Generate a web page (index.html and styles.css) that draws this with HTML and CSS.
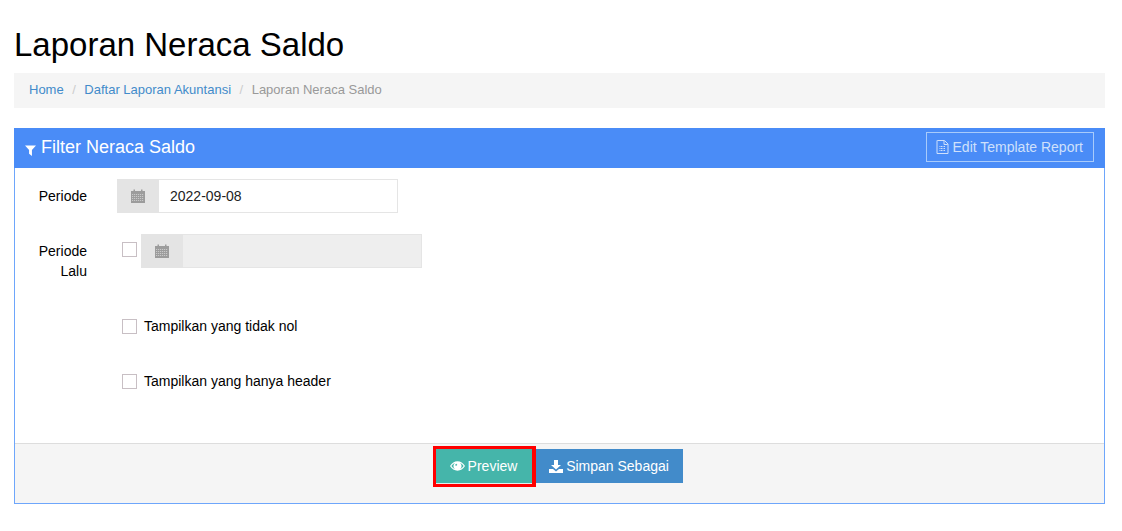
FILE: index.html
```html
<!DOCTYPE html>
<html lang="id">
<head>
<meta charset="utf-8">
<title>Laporan Neraca Saldo</title>
<link rel="stylesheet" href="styles.css">
</head>
<body>
<main class="page">
  <h1 class="title">Laporan Neraca Saldo</h1>
  <nav class="breadcrumb">
    <a href="#">Home</a><span class="sep">/</span><a href="#">Daftar Laporan Akuntansi</a><span class="sep">/</span><span class="current">Laporan Neraca Saldo</span>
  </nav>
  <section class="panel">
    <header class="panel-head">
      <h2 class="panel-title">
        <svg class="ic-filter" viewBox="0 0 10 10"><path d="M0 0.500H10L6.300 4.600V10L3.700 8V4.600Z" fill="#fff"/></svg>
        Filter Neraca Saldo
      </h2>
      <a class="btn-outline" href="#">
        <svg class="ic-file" viewBox="0 0 12 14"><path d="M1 .5H8L11.500 4V13.500H.5V.5Z M7.500 .8V4.500H11.200" fill="none" stroke="currentColor"/><path d="M3 6.500H9M3 8.500H9M3 10.500H9" stroke="currentColor" stroke-dasharray="1 .5"/></svg>
        Edit Template Report
      </a>
    </header>
    <form class="panel-body">
      <div class="row row-periode">
        <label class="label">Periode</label>
        <div class="input-group">
          <span class="addon"><svg class="ic-cal" viewBox="0 0 14 14"><path d="M0 2H2.500V0.500H4V2H10V0.500H11.500V2H14V14H0Z" fill="#9c9c9c"/><path d="M1 5.500H13M1 7.500H13M1 9.500H13M1 11.500H13" stroke="#ddd" stroke-width=".7" stroke-dasharray="1.200 .8"/></svg></span>
          <input class="field" type="text" value="2022-09-08">
        </div>
      </div>
      <div class="row row-lalu">
        <label class="label">Periode Lalu</label>
        <span class="check check-lalu"></span>
        <div class="input-group disabled">
          <span class="addon"><svg class="ic-cal" viewBox="0 0 14 14"><path d="M0 2H2.500V0.500H4V2H10V0.500H11.500V2H14V14H0Z" fill="#9c9c9c"/><path d="M1 5.500H13M1 7.500H13M1 9.500H13M1 11.500H13" stroke="#ddd" stroke-width=".7" stroke-dasharray="1.200 .8"/></svg></span>
          <input class="field" type="text" disabled>
        </div>
      </div>
      <label class="check-row check-row-a"><span class="check"></span>Tampilkan yang tidak nol</label>
      <label class="check-row check-row-b"><span class="check"></span>Tampilkan yang hanya header</label>
    </form>
    <footer class="panel-foot">
      <button class="btn btn-preview" type="button">
        <svg class="ic-eye" viewBox="0 0 16 10"><path fill-rule="evenodd" d="M0 5C2 2 4.800 0 8 0S14 2 16 5C14 8 11.200 10 8 10S2 8 0 5ZM5.200 1.700C3.700 2.300 2.500 3.500 1.500 5 2.500 6.500 3.700 7.700 5.200 8.300A4.300 4.300 0 0 1 5.200 1.700ZM10.800 1.700A4.300 4.300 0 0 1 10.800 8.300C12.300 7.700 13.500 6.500 14.500 5 13.500 3.500 12.300 2.300 10.800 1.700ZM7.800 2.200A.6.6 0 0 0 7.800 3.400 1.500 1.500 0 0 1 6.300 4.800.6.6 0 0 0 5.100 4.800 2.900 2.900 0 0 1 7.800 2.200Z" fill="#fff"/></svg>
        Preview
      </button>
      <button class="btn btn-save" type="button">
        <svg class="ic-dl" viewBox="0 0 14 13"><path d="M5 0H9V5H12L7 9.500 2 5H5Z" fill="#fff"/><path d="M0 9H4L7 11.500 10 9H14V13H0Z" fill="#fff"/></svg>
        Simpan Sebagai
      </button>
    </footer>
  </section>
</main>
</body>
</html>
```
FILE: styles.css
```css
* { box-sizing: border-box; }
html, body { margin: 0; padding: 0; }
body {
  background: #fff;
  color: #000;
  font-family: "Liberation Sans", Arial, sans-serif;
  font-size: 14px;
  line-height: 20px;
}
.page { padding: 0 17px 28px 14px; }
.title {
  margin: 0;
  padding: 25px 0 9px;
  font-size: 33px;
  font-weight: 400;
  line-height: 39px;
}
.breadcrumb {
  height: 35px;
  padding: 7px 15px 8px;
  background: #f5f5f5;
  font-size: 13px;
  line-height: 20px;
  margin-bottom: 20px;
}
.breadcrumb a { color: #428bca; text-decoration: none; }
.breadcrumb .sep { color: #ccc; padding: 0 8.500px; }
.breadcrumb .current { color: #999; }
.panel {
  border: 1px solid #6ea6fb;
  border-top: 0;
  background: #fff;
}
.panel-head {
  height: 40px;
  margin: 0 -1px;
  padding: 0 11px 0 11px;
  background: #4a8cf7;
  display: flex;
  align-items: center;
  justify-content: space-between;
  color: #fff;
}
.panel-title {
  margin: 0 0 2px;
  font-size: 18px;
  font-weight: 400;
  line-height: 20px;
  display: flex;
  align-items: center;
  gap: 5px;
}
.ic-filter { width: 11px; height: 11px; margin-top: 6px; }
.btn-outline {
  height: 30px;
  margin-bottom: 2px;
  padding: 0 10px 0 9px;
  border: 1px solid #a8cbfb;
  color: #cfe0fb;
  text-decoration: none;
  display: flex;
  align-items: center;
  gap: 4px;
  font-size: 14px;
}
.ic-file { width: 13px; height: 14px; }
.panel-body { height: 275px; padding-top: 11px; }
.row { display: flex; align-items: flex-start; }
.label { width: 72px; text-align: right; flex: none; padding-top: 7px; }
.row-periode .label { margin-right: 30px; }
.input-group {
  width: 281px;
  height: 34px;
  display: flex;
  border: 1px solid #e5e5e5;
  flex: none;
}
.addon {
  width: 42px;
  flex: none;
  background: #e4e4e4;
  display: flex;
  align-items: center;
  justify-content: center;
  padding-right: 1px;
  margin: -1px 0 -1px -1px;
}
.ic-cal { width: 14px; height: 14px; }
.field {
  flex: 1;
  min-width: 0;
  border: 0;
  outline: 0;
  padding: 0 11px;
  font: 14px/20px "Liberation Sans", Arial, sans-serif;
  color: #222;
  background: #fff;
}
.disabled .field { background: #eee; }
.row-lalu { margin-top: 21px; }
.row-lalu .label { width: 72px; margin-right: 35px; }
.check {
  display: block;
  width: 15px;
  height: 15px;
  border: 1px solid #c8bfc4;
  background: #fff;
  flex: none;
}
.check-lalu { margin: 8px 4px 0 0; }
.check-row {
  display: flex;
  align-items: center;
  gap: 7px;
  margin-left: 107px;
  height: 20px;
}
.check-row-a { margin-top: 35px; }
.check-row-b { margin-top: 35px; }
.panel-foot {
  height: 60px;
  border-top: 1px solid #ddd;
  background: #f5f5f5;
  display: flex;
  align-items: flex-start;
  justify-content: center;
  padding-top: 5px;
}
.btn {
  height: 34px;
  border: 0;
  color: #fff;
  font: 14px/20px "Liberation Sans", Arial, sans-serif;
  padding: 0 1px 0 0;
  display: flex;
  align-items: center;
  justify-content: center;
  gap: 3px;
}
.btn-preview {
  width: 96px;
  height: 35px;
  border-bottom: 1px solid #dff1ef;
  background: #45b5aa;
  box-shadow: 0 0 0 3px #f00, 1px 0 0 3px #f00;
  margin-right: 4px;
}
.btn-save { width: 147px; background: #428bca; }
.ic-eye { width: 15px; height: 10px; }
.ic-dl { width: 14px; height: 13px; }
```
